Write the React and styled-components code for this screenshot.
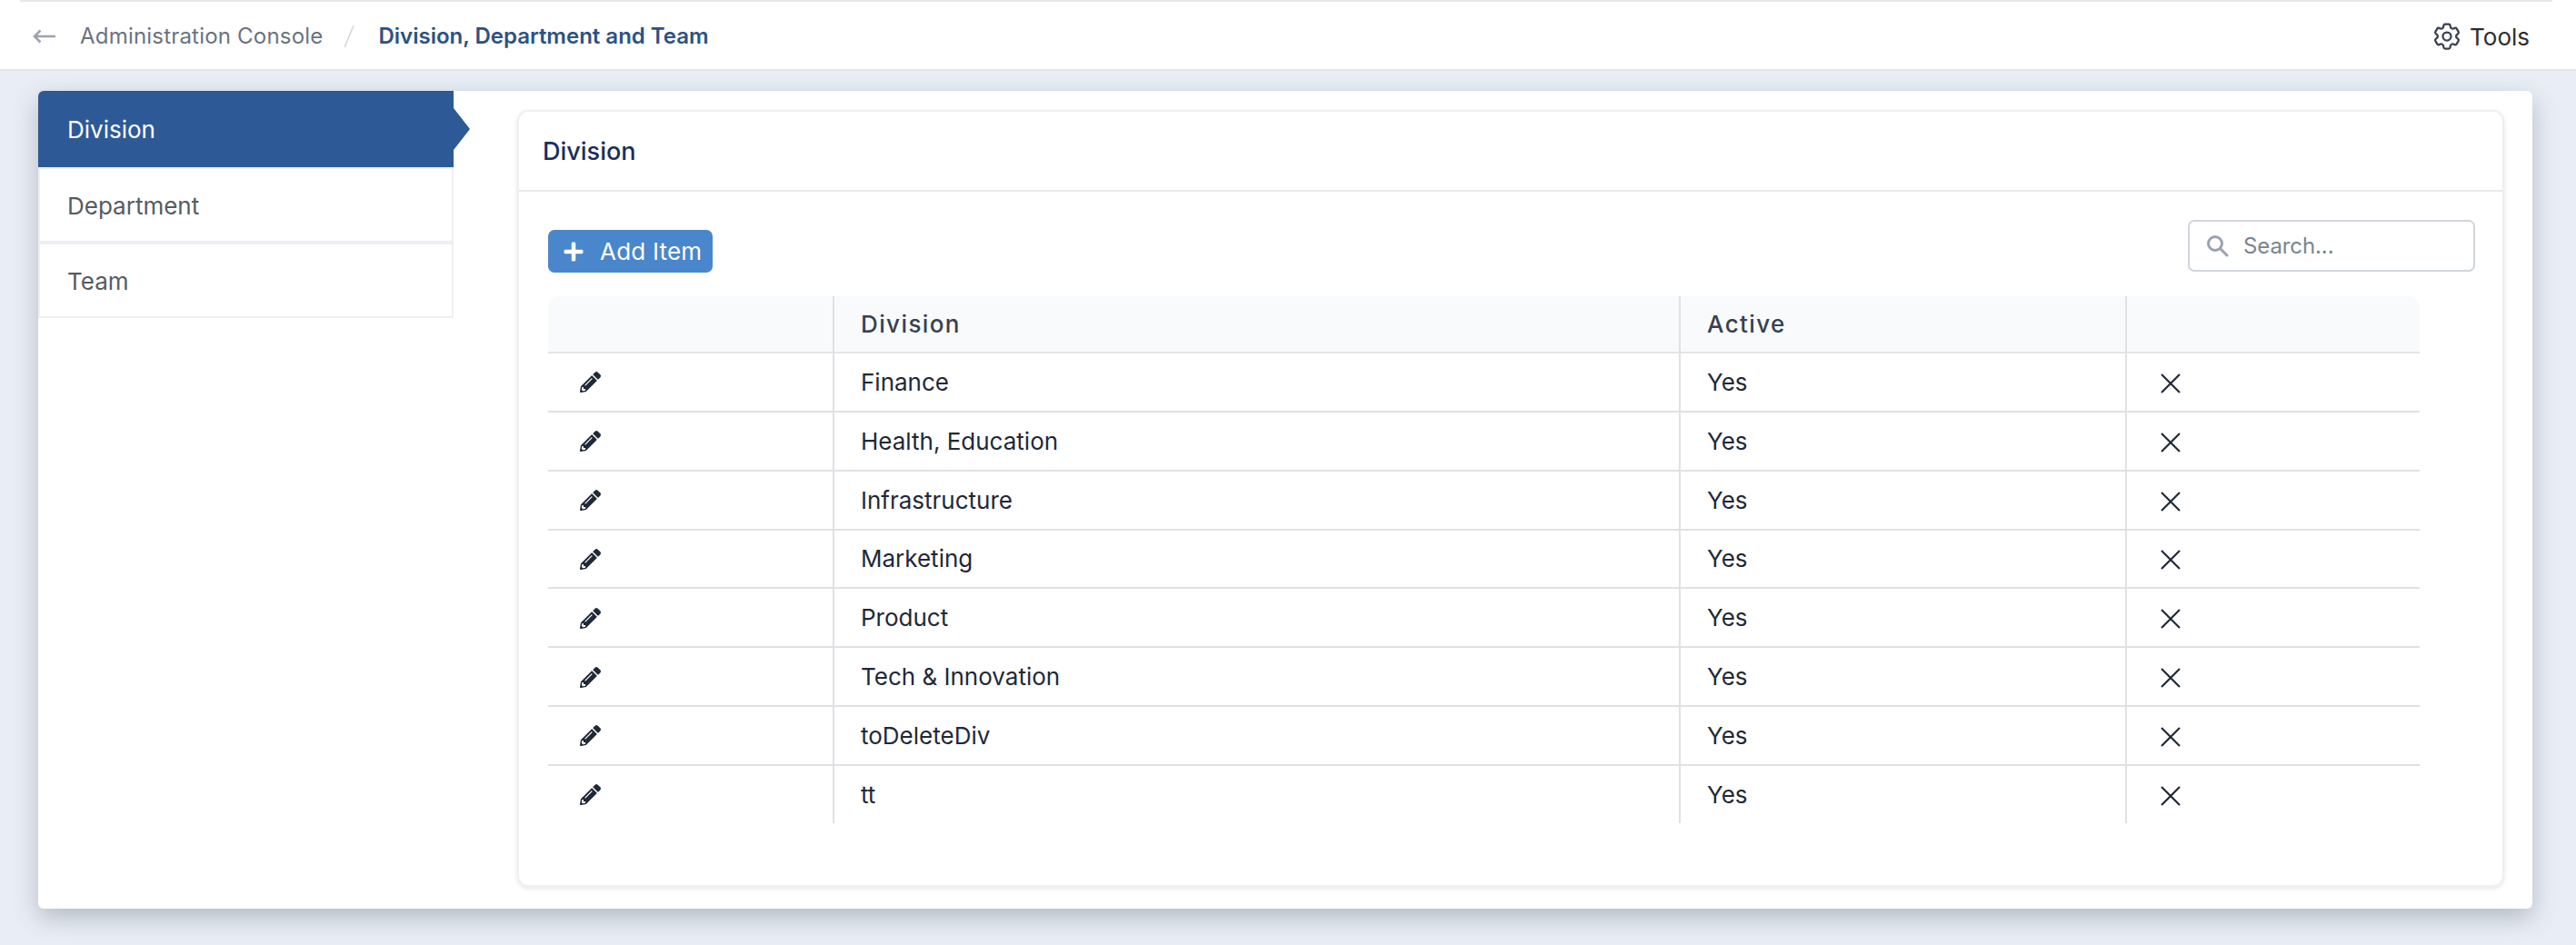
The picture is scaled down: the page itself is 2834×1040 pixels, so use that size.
import React from 'react';
import styled, { createGlobalStyle } from 'styled-components';
import { FaPencilAlt, FaPlus } from 'react-icons/fa';
import { HiOutlineCog6Tooth } from 'react-icons/hi2';

const GlobalStyle = createGlobalStyle`
  html, body {
    margin: 0;
    padding: 0;
    background: #e9eef6;
    font-family: Inter, "Noto Sans", sans-serif;
  }
  * {
    box-sizing: border-box;
  }
`;

const Page = styled.div`
  width: 2834px;
  height: 1040px;
  overflow: hidden;
  background: #e9eef6;
`;

const TopBar = styled.header`
  height: 78px;
  background: #fff;
  border-bottom: 2px solid #e3e6eb;
  position: relative;
  display: flex;
  align-items: center;
  justify-content: space-between;
  padding: 4px 51px 0 36px;

  &::before {
    content: '';
    position: absolute;
    top: 0;
    left: 22px;
    right: 26px;
    height: 2px;
    background: #e5e7eb;
  }
`;

const Crumbs = styled.nav`
  display: flex;
  align-items: center;
  font-size: 24px;
  line-height: 32px;
`;

const BackIcon = styled.svg`
  width: 25px;
  height: 16px;
  margin-right: 27px;
  color: #9ca3af;
`;

const CrumbLink = styled.span`
  color: #6b7280;
  letter-spacing: 0.2px;
`;

const Slash = styled.svg`
  width: 14px;
  height: 26px;
  margin: 0 25px 0 22px;
  color: #d1d5db;
`;

const CrumbCurrent = styled.span`
  color: #2c5282;
  font-weight: 600;
`;

const ToolsButton = styled.div`
  display: flex;
  align-items: center;
  gap: 7px;
  font-size: 26px;
  color: #2d2d2d;

  svg {
    width: 36px;
    height: 36px;
    color: #374151;
  }
`;

const Panel = styled.main`
  margin: 22px 48px 0 42px;
  height: 900px;
  background: #fff;
  border-radius: 6px;
  box-shadow: 0 10px 28px rgba(40, 55, 70, 0.28);
  display: flex;
`;

const Sidebar = styled.aside`
  width: 457px;
  flex: none;
  display: flex;
  flex-direction: column;
`;

const SideItem = styled.div`
  position: relative;
  display: flex;
  align-items: center;
  font-size: 26px;
  height: ${(p) => (p.$active ? '84px' : '83px')};
  padding-left: ${(p) => (p.$active ? '32px' : '30px')};
  padding-top: ${(p) => (p.$active ? '0' : '2px')};
  color: ${(p) => (p.$active ? '#fff' : '#555b63')};
  background: ${(p) => (p.$active ? '#2d5a96' : '#fff')};
  border-radius: ${(p) => (p.$active ? '6px 0 0 0' : '0')};
  border: ${(p) => (p.$active ? 'none' : '2px solid #edeff4')};

  ${(p) =>
    p.$active &&
    `
    &::after {
      content: '';
      position: absolute;
      left: 100%;
      top: 50%;
      margin-top: -23px;
      border-top: 23px solid transparent;
      border-bottom: 23px solid transparent;
      border-left: 18px solid #2d5a96;
    }
  `}
`;

const Card = styled.section`
  width: 2186px;
  height: 855px;
  margin: 21px 0 0 70px;
  background: #fff;
  border: 2px solid #eef0f3;
  border-radius: 12px;
  box-shadow: 0 2px 5px rgba(40, 55, 70, 0.12);
`;

const CardHead = styled.div`
  height: 88px;
  border-bottom: 2px solid #e8eaee;
  display: flex;
  align-items: center;
  padding-left: 26px;
  font-size: 27px;
  font-weight: 500;
  color: #1a2e5a;
`;

const Toolbar = styled.div`
  display: flex;
  align-items: flex-start;
  justify-content: space-between;
  padding: 31px 30px 0 32px;
`;

const AddButton = styled.button`
  width: 181px;
  height: 47px;
  margin-top: 11px;
  border: none;
  border-radius: 7px;
  background: #4a86cb;
  color: #fff;
  font-family: inherit;
  font-size: 26px;
  display: flex;
  align-items: center;
  padding: 0 0 0 16px;
  gap: 17px;
  letter-spacing: 0.2px;

  svg {
    width: 24px;
    height: 24px;
  }
`;

const SearchBox = styled.div`
  width: 316px;
  height: 57px;
  border: 2px solid #d1d5db;
  border-radius: 7px;
  display: flex;
  align-items: center;
  padding-left: 18px;
  gap: 16px;
  font-size: 24px;
  letter-spacing: -0.1px;
  color: #7a8491;
  background: #fff;
`;

const SearchIcon = styled.svg`
  width: 25px;
  height: 25px;
  color: #9ca3af;
`;

const Table = styled.table`
  table-layout: fixed;
  border-collapse: separate;
  border-spacing: 0;
  width: 2059px;
  margin: 26px 0 0 32px;
`;

const HeadCell = styled.th`
  height: 63px;
  background: #f9fafb;
  border-bottom: 2px solid #e3e5e8;
  border-right: ${(p) => (p.$last ? 'none' : '2px solid #dfe1e4')};
  padding: 0 0 0 29px;
  text-align: left;
  font-size: 26px;
  font-weight: 500;
  letter-spacing: 1.4px;
  color: #374151;

  &:first-child {
    border-top-left-radius: 12px;
  }
  &:last-child {
    border-top-right-radius: 12px;
  }
`;

const Cell = styled.td`
  height: ${(p) => (p.$bottom ? '63px' : '64.85px')};
  border-bottom: ${(p) => (p.$bottom ? 'none' : '2px solid #dfe1e4')};
  border-right: ${(p) => (p.$last ? 'none' : '2px solid #dfe1e4')};
  padding: 0 0 0 29px;
  font-size: 26px;
  color: #1f2937;
`;

const EditCell = styled(Cell)`
  padding-left: 35px;

  svg {
    display: block;
    width: 23px;
    height: 23px;
    margin-top: 1px;
    color: #1f2937;
  }
`;

const RemoveCell = styled(Cell)`
  padding-left: 37px;
`;

const CloseIcon = styled.svg`
  display: block;
  width: 22px;
  height: 22px;
  margin-top: 3px;
  color: #1f2937;
`;

const divisions = [
  'Finance',
  'Health, Education',
  'Infrastructure',
  'Marketing',
  'Product',
  'Tech & Innovation',
  'toDeleteDiv',
  'tt',
];

const App = () => {
  return (
    <Page>
      <GlobalStyle />
      <TopBar>
        <Crumbs>
          <BackIcon viewBox="0 0 25 16" fill="none" stroke="currentColor" strokeWidth="2.6">
            <path d="M25 8H2M8.5 1.5L2 8l6.5 6.5" />
          </BackIcon>
          <CrumbLink>Administration Console</CrumbLink>
          <Slash viewBox="0 0 14 26" fill="none" stroke="currentColor" strokeWidth="1.5">
            <path d="M12 1L2 25" />
          </Slash>
          <CrumbCurrent>Division, Department and Team</CrumbCurrent>
        </Crumbs>
        <ToolsButton>
          <HiOutlineCog6Tooth />
          Tools
        </ToolsButton>
      </TopBar>
      <Panel>
        <Sidebar>
          <SideItem $active>Division</SideItem>
          <SideItem>Department</SideItem>
          <SideItem>Team</SideItem>
        </Sidebar>
        <Card>
          <CardHead>Division</CardHead>
          <Toolbar>
            <AddButton>
              <FaPlus />
              Add Item
            </AddButton>
            <SearchBox>
              <SearchIcon viewBox="0 0 25 25" fill="none" stroke="currentColor" strokeWidth="3" strokeLinecap="round">
                <circle cx="10" cy="10" r="7.5" />
                <path d="M16 16l7 7" />
              </SearchIcon>
              Search...
            </SearchBox>
          </Toolbar>
          <Table>
            <colgroup>
              <col width="315" />
              <col width="931" />
              <col width="491" />
              <col width="322" />
            </colgroup>
            <thead>
              <tr>
                <HeadCell />
                <HeadCell>Division</HeadCell>
                <HeadCell>Active</HeadCell>
                <HeadCell $last />
              </tr>
            </thead>
            <tbody>
              {divisions.map((name, i) => {
                const bottom = i === divisions.length - 1;
                return (
                  <tr key={name}>
                    <EditCell $bottom={bottom}>
                      <FaPencilAlt />
                    </EditCell>
                    <Cell $bottom={bottom}>{name}</Cell>
                    <Cell $bottom={bottom}>Yes</Cell>
                    <RemoveCell $bottom={bottom} $last>
                      <CloseIcon viewBox="0 0 22 22" fill="none" stroke="currentColor" strokeWidth="2.2">
                        <path d="M1 1l20 20M21 1L1 21" />
                      </CloseIcon>
                    </RemoveCell>
                  </tr>
                );
              })}
            </tbody>
          </Table>
        </Card>
      </Panel>
    </Page>
  );
};

export default App;
